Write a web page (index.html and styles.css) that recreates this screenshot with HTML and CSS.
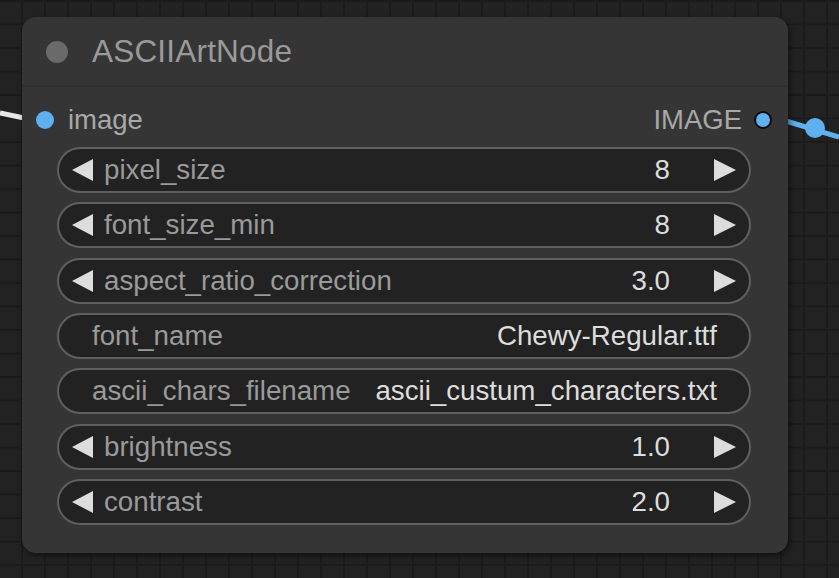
FILE: index.html
```html
<!DOCTYPE html>
<html>
<head>
<meta charset="utf-8">
<link rel="stylesheet" href="styles.css">
</head>
<body>
<div class="canvas">
  <svg class="links" width="839" height="578" viewBox="0 0 839 578">
    <path d="M0 113 L24 118" stroke="#e8e8e8" stroke-width="5" fill="none"/>
    <path d="M786 121 L839 137" stroke="#5fb0f0" stroke-width="5" fill="none"/>
    <circle cx="815" cy="128" r="10" fill="#5fb0f0"/>
  </svg>
  <div class="node">
    <div class="node-header">
      <span class="node-dot"></span>
      <span class="node-title">ASCIIArtNode</span>
    </div>
    <div class="node-body">
      <div class="io-row">
        <div class="io-in"><span class="slot slot-in"></span><span>image</span></div>
        <div class="io-out"><span>IMAGE</span><span class="slot slot-out"></span></div>
      </div>
      <div class="widgets">
        <div class="widget number">
          <span class="arrow left"></span>
          <span class="label">pixel_size</span>
          <span class="value">8</span>
          <span class="arrow right"></span>
        </div>
        <div class="widget number">
          <span class="arrow left"></span>
          <span class="label">font_size_min</span>
          <span class="value">8</span>
          <span class="arrow right"></span>
        </div>
        <div class="widget number">
          <span class="arrow left"></span>
          <span class="label">aspect_ratio_correction</span>
          <span class="value">3.0</span>
          <span class="arrow right"></span>
        </div>
        <div class="widget combo">
          <span class="label">font_name</span>
          <span class="value">Chewy-Regular.ttf</span>
        </div>
        <div class="widget combo">
          <span class="label">ascii_chars_filename</span>
          <span class="value">ascii_custum_characters.txt</span>
        </div>
        <div class="widget number">
          <span class="arrow left"></span>
          <span class="label">brightness</span>
          <span class="value">1.0</span>
          <span class="arrow right"></span>
        </div>
        <div class="widget number">
          <span class="arrow left"></span>
          <span class="label">contrast</span>
          <span class="value">2.0</span>
          <span class="arrow right"></span>
        </div>
      </div>
    </div>
  </div>
</div>
</body>
</html>
```
FILE: styles.css
```css
html, body {
  margin: 0;
  padding: 0;
  width: 839px;
  height: 578px;
  overflow: hidden;
  background: #222222;
  font-family: "Liberation Sans", Arial, sans-serif;
}

.canvas {
  position: relative;
  width: 839px;
  height: 578px;
  background-color: #222222;
  background-image:
    linear-gradient(to right, #1b1b1b 0 2px, transparent 2px),
    linear-gradient(to bottom, #1b1b1b 0 2px, transparent 2px);
  background-size: 23px 23.5px;
  background-position: 21px 0px;
}

.links {
  position: absolute;
  left: 0;
  top: 0;
}

.node {
  position: absolute;
  left: 22px;
  top: 17px;
  width: 766px;
  height: 536px;
  background: #353535;
  border-radius: 14px;
  box-shadow: 2px 3px 6px rgba(0, 0, 0, 0.5);
  display: flex;
  flex-direction: column;
}

.node-header {
  height: 70px;
  box-sizing: border-box;
  border-bottom: 2px solid #2f2f2f;
  display: flex;
  align-items: center;
  padding-left: 24px;
  padding-top: 1px;
  gap: 24px;
}

.node-dot {
  width: 22px;
  height: 22px;
  border-radius: 50%;
  background: #6a6a6a;
}

.node-title {
  color: #9a9a9a;
  font-size: 31.5px;
  line-height: 1;
  letter-spacing: 0.2px;
}

.node-body {
  display: flex;
  flex-direction: column;
  padding: 0 37px 0 35px;
}

.io-row {
  height: 60px;
  display: flex;
  align-items: center;
  justify-content: space-between;
  font-size: 27.5px;
  color: #a8a8a8;
  margin: 0 -37px 0 -35px;
  padding: 6px 16px 0 14px;
  box-sizing: border-box;
}

.io-in, .io-out {
  display: flex;
  align-items: center;
}

.io-in { gap: 14px; }
.io-out { gap: 12px; }

.slot {
  width: 18px;
  height: 18px;
  border-radius: 50%;
  background: #5fb0f0;
  box-sizing: border-box;
}

.slot-out {
  border: 2px solid #0a0a0a;
}

.widgets {
  display: flex;
  flex-direction: column;
  gap: 9.33px;
}

.widget {
  height: 46px;
  box-sizing: border-box;
  border: 2px solid #5f5f5f;
  border-radius: 23px;
  background: #222222;
  display: flex;
  align-items: center;
  font-size: 27.7px;
  line-height: 1;
}

.widget .label {
  color: #9a9a9a;
  flex: 0 0 auto;
}

.widget .value {
  color: #dddddd;
  margin-left: auto;
  white-space: nowrap;
}

.widget.number {
  padding: 0 13px 0 13px;
}

.widget.number .label {
  margin-left: 11px;
}

.widget.number .value {
  margin-right: 44px;
}

.widget.combo {
  padding: 0 32px 0 33px;
}

.arrow {
  width: 0;
  height: 0;
  border-top: 11.5px solid transparent;
  border-bottom: 11.5px solid transparent;
}

.arrow.left {
  border-right: 21px solid #dddddd;
}

.arrow.right {
  border-left: 22px solid #dddddd;
}
```
